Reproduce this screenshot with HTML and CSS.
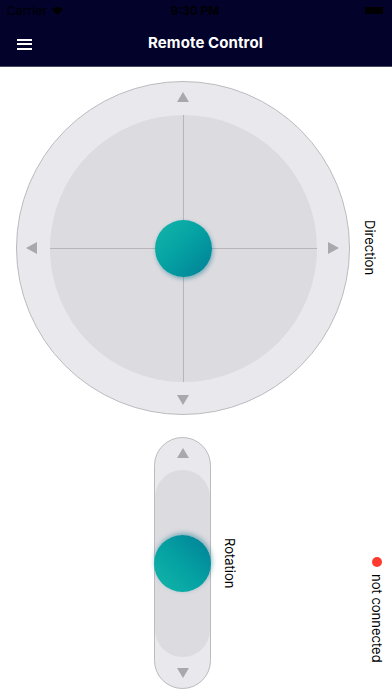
FILE: index.html
```html
<!DOCTYPE html>
<html>
<head>
<meta charset="utf-8">
<link rel="stylesheet" href="styles.css">
</head>
<body>
<header class="topbar">
  <div class="status">
    <div class="status-left">
      <span class="carrier">Carrier</span>
      <svg class="wifi" width="11" height="9" viewBox="0 0 11 9"><path d="M5.5 9 L0 3.2 A8 8 0 0 1 11 3.2 Z" fill="#000"/></svg>
    </div>
    <span class="time">9:30 PM</span>
    <div class="status-right"><span class="battery"></span></div>
  </div>
  <div class="navbar">
    <div class="menu"><span></span><span></span><span></span></div>
    <h1 class="title">Remote Control</h1>
  </div>
</header>
<main class="main">
  <section class="row-direction">
    <div class="pad">
      <div class="pad-inner">
        <div class="line-v"></div>
        <div class="line-h"></div>
        <div class="knob knob-pad"></div>
      </div>
      <span class="arrow arrow-up pad-up"></span>
      <span class="arrow arrow-down pad-down"></span>
      <span class="arrow arrow-left pad-left"></span>
      <span class="arrow arrow-right pad-right"></span>
    </div>
    <span class="vlabel label-direction">Direction</span>
  </section>
  <section class="row-rotation">
    <div class="slider">
      <span class="arrow arrow-up"></span>
      <div class="slider-track">
        <div class="knob knob-slider"></div>
      </div>
      <span class="arrow arrow-down"></span>
    </div>
    <span class="vlabel label-rotation">Rotation</span>
    <div class="connection">
      <span class="dot"></span>
      <span class="vlabel">not connected</span>
    </div>
  </section>
</main>
</body>
</html>
```

FILE: styles.css
```css
* { box-sizing: border-box; }
html, body { margin: 0; padding: 0; }
body {
  width: 392px;
  height: 696px;
  overflow: hidden;
  background: #ffffff;
  font-family: Inter, "Liberation Sans", sans-serif;
  color: #000;
}

.topbar {
  background: #02022a;
  height: 67px;
  border-bottom: 1px solid #4a4a5e;
}
.status {
  height: 21px;
  display: flex;
  align-items: center;
  justify-content: space-between;
  padding: 0 9px 0 7px;
  font-size: 12px;
  color: #000;
}
.status-left, .status-right { width: 80px; display: flex; align-items: center; gap: 5px; }
.status-right { justify-content: flex-end; }
.carrier { letter-spacing: 0.1px; }
.time { font-weight: 600; font-size: 12px; }
.battery {
  width: 18px; height: 7px; background: #000; border-radius: 1px;
}

.navbar {
  height: 45px;
  display: flex;
  align-items: center;
  padding: 0 17px 2px 17px;
}
.menu {
  width: 15px;
  display: flex;
  flex-direction: column;
  gap: 2.5px;
  margin-top: 3px;
  flex: none;
}
.menu span { height: 2px; background: #ffffff; display: block; }
.title {
  flex: 1;
  margin: 0;
  padding-left: 4px;
  text-align: center;
  color: #ffffff;
  font-size: 15px;
  font-weight: 700;
  letter-spacing: 0.1px;
}

.main { display: flex; flex-direction: column; }

.row-direction {
  display: flex;
  align-items: center;
  padding: 14px 0 0 16px;
}
.pad {
  position: relative;
  width: 334px;
  height: 334px;
  border-radius: 50%;
  background: #e9e8ed;
  border: 1px solid #bbbabf;
  display: grid;
  place-items: center;
  flex: none;
}
.pad-inner {
  position: relative;
  width: 267px;
  height: 267px;
  border-radius: 50%;
  background: #dcdbe0;
  display: grid;
  place-items: center;
}
.line-v {
  position: absolute;
  left: 133px; top: 0;
  width: 1px; height: 100%;
  background: #b6b5ba;
}
.line-h {
  position: absolute;
  top: 133px; left: 0;
  height: 1px; width: 100%;
  background: #b6b5ba;
}
.knob {
  width: 57px;
  height: 57px;
  border-radius: 50%;
  position: relative;
}
.knob-pad {
  background: linear-gradient(135deg, #14b6aa 0%, #05a3a3 45%, #007f97 100%);
  box-shadow: 1px 2px 4px rgba(0, 110, 130, 0.45);
}

.arrow { display: block; width: 0; height: 0; }
.arrow-up { border-left: 6px solid transparent; border-right: 6px solid transparent; border-bottom: 10px solid #a9a8ad; }
.arrow-down { border-left: 6px solid transparent; border-right: 6px solid transparent; border-top: 10px solid #a9a8ad; }
.arrow-left { border-top: 6px solid transparent; border-bottom: 6px solid transparent; border-right: 11px solid #a9a8ad; }
.arrow-right { border-top: 6px solid transparent; border-bottom: 6px solid transparent; border-left: 11px solid #a9a8ad; }
.pad-up { position: absolute; top: 10px; left: 160px; }
.pad-down { position: absolute; bottom: 9px; left: 160px; }
.pad-left { position: absolute; left: 9px; top: 160px; }
.pad-right { position: absolute; right: 10px; top: 160px; }

.vlabel {
  writing-mode: vertical-rl;
  font-size: 13px;
  line-height: 1;
  color: #000;
}
.label-direction { margin-left: 13px; }

.row-rotation {
  display: flex;
  align-items: center;
  padding: 22px 9px 0 154px;
}
.slider {
  width: 57px;
  height: 252px;
  border-radius: 29px;
  background: #e9e8ed;
  border: 1px solid #bbbabf;
  display: flex;
  flex-direction: column;
  align-items: center;
  flex: none;
}
.slider .arrow-up { margin-top: 10px; }
.slider .arrow-down { margin-top: 11px; }
.slider-track {
  margin-top: 12px;
  width: 55px;
  height: 187px;
  border-radius: 28px;
  background: #dcdbe0;
  display: flex;
  align-items: center;
  justify-content: center;
}
.knob-slider {
  flex: none;
  background: linear-gradient(45deg, #14b6aa 0%, #05a3a3 45%, #007f97 100%);
  box-shadow: 1px -2px 5px rgba(0, 110, 130, 0.45);
}
.label-rotation { margin-left: 12px; }

.connection {
  margin-left: auto;
  align-self: flex-end;
  margin-bottom: 26px;
  display: flex;
  flex-direction: column;
  align-items: center;
  gap: 7px;
}
.dot {
  width: 10px; height: 10px; border-radius: 50%;
  background: #ff3b30;
}
```
